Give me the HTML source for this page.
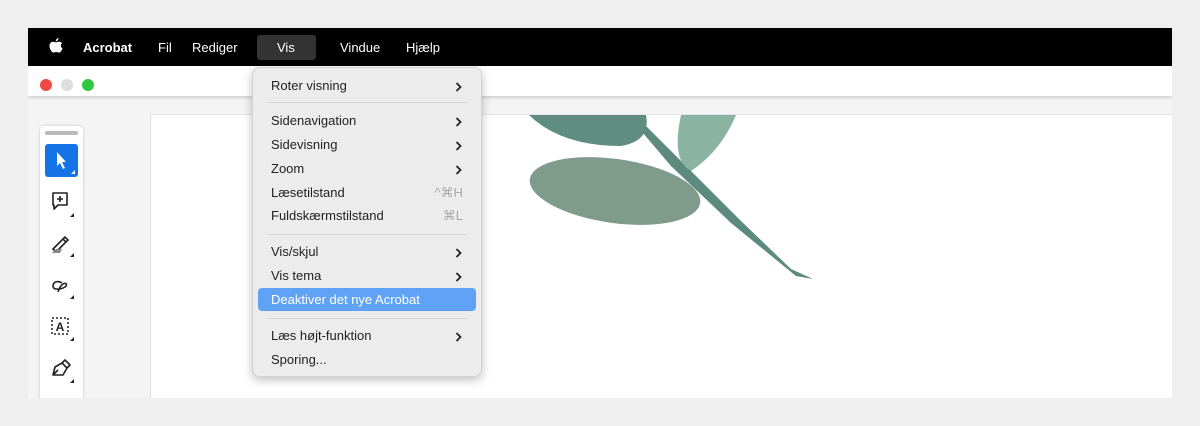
<!DOCTYPE html>
<html><head><meta charset="utf-8"><style>
*{margin:0;padding:0;box-sizing:border-box}
body{width:1200px;height:426px;background:#efefef;font-family:"Liberation Sans",sans-serif;position:relative;overflow:hidden}
.win{position:absolute;left:28px;top:28px;width:1144px;height:370px;background:#f4f4f4;overflow:hidden}
.mb{position:absolute;left:0;top:0;width:1144px;height:38px;background:#000;color:#fff;font-size:13px}
.mb span{position:absolute;top:12px}
.title{position:absolute;left:0;top:38px;width:1144px;height:30px;background:#fff;box-shadow:0 2px 3px rgba(0,0,0,.15)}
.dot{position:absolute;top:13px;width:12px;height:12px;border-radius:50%}
.page{position:absolute;left:122px;top:86px;width:1022px;height:290px;background:#fff;border-left:1px solid #ddd;border-top:1px solid #e4e4e4}
.tools{position:absolute;left:12px;top:98px;width:43px;height:290px;background:#fff;border-radius:4px;box-shadow:0 0 3px rgba(0,0,0,.2)}
.tools svg{position:absolute}
.menu{position:absolute;left:252px;top:67px;width:230px;height:310px;background:#ececec;border-radius:8px;box-shadow:0 3px 10px rgba(0,0,0,.25);border:1px solid #d2d2d2;font-size:13px;color:#222}
.it{position:absolute;left:18px;right:18px;height:20px;line-height:20px}
.it b{position:absolute;right:1px;top:2px;width:7px;height:10px}
.it i{position:absolute;right:0;top:0;font-style:normal;color:#aaa}
.sep{position:absolute;left:14px;right:14px;height:1px;background:#d6d6d6}
</style></head><body>
<svg width="0" height="0" style="position:absolute"><defs><symbol id="ch" viewBox="0 0 7 10"><path d="M1.5 1 L5.5 5 L1.5 9" fill="none" stroke="#222" stroke-width="1.8"/></symbol></defs></svg>
<div class="win">
 <div class="mb">
  <svg style="position:absolute;left:21px;top:10px" width="14" height="17" viewBox="0 0 14 17"><path d="M9.5 0 C9.6 1.6 8.4 3.2 6.8 3.2 C6.7 1.7 8 0.2 9.5 0Z M7 4.3 C8 4.3 9 3.6 10 3.6 C11 3.6 12.3 4.1 13.1 5.3 C11.2 6.4 11.4 9.3 13.5 10.2 C12.9 12 11.6 14.6 10 14.6 C9 14.6 8.6 14 7.3 14 C6 14 5.6 14.6 4.6 14.6 C3 14.6 0.5 11.2 0.5 8 C0.5 5.3 2.2 3.7 4 3.7 C5.2 3.7 6 4.3 7 4.3Z" fill="#fff"/></svg>
  <span style="left:55px;font-weight:bold">Acrobat</span>
  <span style="left:130px">Fil</span>
  <span style="left:164px">Rediger</span>
  <div style="position:absolute;left:229px;top:7px;width:59px;height:25px;background:#333;border-radius:3px"></div>
  <span style="left:249px">Vis</span>
  <span style="left:312px">Vindue</span>
  <span style="left:378px">Hjælp</span>
 </div>
 <div class="title">
  <div class="dot" style="left:12px;background:#f04a45"></div>
  <div class="dot" style="left:33px;background:#ddd"></div>
  <div class="dot" style="left:54px;background:#2dc840"></div>
 </div>
 <div class="page">
  <svg width="1022" height="290" style="position:absolute;left:0;top:0">
   <g transform="translate(-150,-114)">
    <path d="M640 120 L680 160 L740 220 L790 268 L812 278 L795 275 L730 222 L670 165 L636 125Z" fill="#5c8a7c"/>
    <path d="M528 114 Q560 145 620 145 Q650 140 645 114Z" fill="#5f8e80"/>
    <path d="M680 114 L735 114 Q720 150 690 170 Q670 160 680 114Z" fill="#8bb3a1"/>
    <ellipse cx="614" cy="190" rx="86" ry="32" transform="rotate(8 614 190)" fill="#7f9b8b"/>
   </g>
  </svg>
 </div>
 <div class="tools">
  <div style="position:absolute;left:5px;top:5px;width:33px;height:4px;background:#bbb;border-radius:2px"></div>
  <div style="position:absolute;left:5px;top:18px;width:33px;height:33px;background:#1473e6;border-radius:3px"></div>
  <svg style="left:5px;top:18px" width="33" height="33"><path d="M12 8 L12 22 L15 19 L18 25 L20 24 L17 18 L21 18Z" fill="#fff"/><path d="M30 26 L30 30 L26 30Z" fill="#fff"/></svg>
  <svg style="left:8px;top:64px" width="30" height="30"><path d="M5 3 H19 V15 H10 L6 19 V15 H5Z" fill="none" stroke="#222" stroke-width="1.6" stroke-linejoin="round"/><path d="M12 6 V12 M9 9 H15" stroke="#222" stroke-width="1.6"/><path d="M26 23 L26 27 L22 27Z" fill="#222"/></svg>
  <svg style="left:8px;top:104px" width="30" height="30"><path d="M5 19 L15 9 L18 12 L8 22Z M15 9 L17 7 L20 10 L18 12" fill="none" stroke="#222" stroke-width="1.6"/><path d="M4 23 H12 L14 19 H8Z" fill="#888"/><path d="M26 23 L26 27 L22 27Z" fill="#222"/></svg>
  <svg style="left:8px;top:146px" width="30" height="30"><path d="M14 11 C10 8 5 10 5 14 C5 18 12 18 17 15 C20 13 18 10 15 12 C12 14 11 17 10 20" fill="none" stroke="#222" stroke-width="1.6"/><path d="M26 23 L26 27 L22 27Z" fill="#222"/></svg>
  <svg style="left:8px;top:188px" width="30" height="30"><rect x="4" y="4" width="16" height="16" fill="none" stroke="#222" stroke-width="1.5" stroke-dasharray="2 2"/><text x="12" y="17" font-family="Liberation Sans" font-size="12" font-weight="bold" text-anchor="middle" fill="#222">A</text><path d="M26 23 L26 27 L22 27Z" fill="#222"/></svg>
  <svg style="left:8px;top:230px" width="30" height="30"><path d="M5 19 L7 11 L14 7 L19 12 L15 19Z M14 7 L17 4 L22 9 L19 12 M5 19 L10 14" fill="none" stroke="#222" stroke-width="1.6" stroke-linejoin="round"/><path d="M26 23 L26 27 L22 27Z" fill="#222"/></svg>
 </div>
</div>
<div class="menu">
 <div class="it" style="top:8px">Roter visning<b><svg width="7" height="10"><use href="#ch"/></svg></b></div>
 <div class="sep" style="top:34px"></div>
 <div class="it" style="top:43px">Sidenavigation<b><svg width="7" height="10"><use href="#ch"/></svg></b></div>
 <div class="it" style="top:67px">Sidevisning<b><svg width="7" height="10"><use href="#ch"/></svg></b></div>
 <div class="it" style="top:91px">Zoom<b><svg width="7" height="10"><use href="#ch"/></svg></b></div>
 <div class="it" style="top:115px">Læsetilstand<i>^⌘H</i></div>
 <div class="it" style="top:138px">Fuldskærmstilstand<i>⌘L</i></div>
 <div class="sep" style="top:166px"></div>
 <div class="it" style="top:174px">Vis/skjul<b><svg width="7" height="10"><use href="#ch"/></svg></b></div>
 <div class="it" style="top:198px">Vis tema<b><svg width="7" height="10"><use href="#ch"/></svg></b></div>
 <div style="position:absolute;left:5px;right:5px;top:220px;height:23px;background:#60a3f6;border-radius:4px"></div>
 <div class="it" style="top:222px;color:#fff">Deaktiver det nye Acrobat</div>
 <div class="sep" style="top:250px"></div>
 <div class="it" style="top:258px">Læs højt-funktion<b><svg width="7" height="10"><use href="#ch"/></svg></b></div>
 <div class="it" style="top:282px">Sporing...</div>
</div>
</body></html>
